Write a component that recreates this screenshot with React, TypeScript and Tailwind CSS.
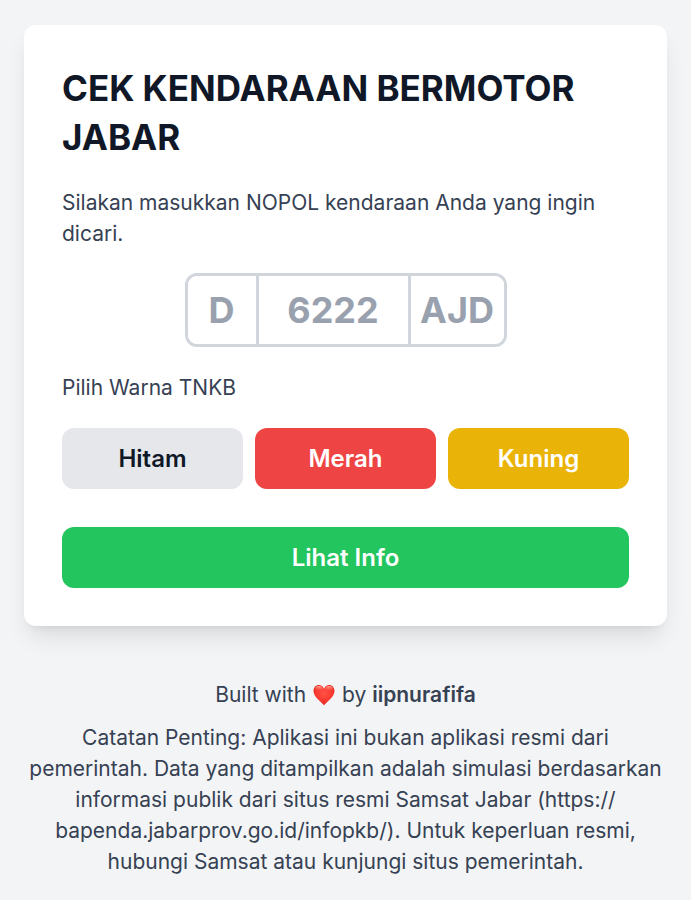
import { useState } from "react";

const colors = [
  { name: "Hitam", style: "bg-gray-200 text-gray-900" },
  { name: "Merah", style: "bg-[#ef4444] text-white" },
  { name: "Kuning", style: "bg-[#eab308] text-white" },
];

function Heart() {
  return (
    <svg viewBox="0 0 24 22" className="inline-block h-[22px] w-6 align-[-4px]" role="img" aria-label="love">
      <defs>
        <radialGradient id="heart" cx="0.5" cy="0.4" r="0.6">
          <stop offset="0" stopColor="#ff5347" />
          <stop offset="0.6" stopColor="#fb3a30" />
          <stop offset="1" stopColor="#dd2a22" />
        </radialGradient>
        <linearGradient id="shine" x1="0" y1="0" x2="0" y2="1">
          <stop offset="0" stopColor="#ffb3a8" stopOpacity="0.9" />
          <stop offset="1" stopColor="#ff6a5e" stopOpacity="0" />
        </linearGradient>
      </defs>
      <path
        d="M12 21.5C10.500 18.500 1.500 13.500 1.500 7C1.500 3.500 3.800 1 6.800 1C9.200 1 11.200 2.300 12 4.800C12.800 2.300 14.800 1 17.200 1C20.200 1 22.500 3.500 22.500 7C22.500 13.500 13.500 18.500 12 21.500Z"
        fill="url(#heart)"
      />
      <ellipse cx="6.800" cy="4.500" rx="3.500" ry="2.500" fill="url(#shine)" />
      <ellipse cx="17.200" cy="4.500" rx="3.500" ry="2.500" fill="url(#shine)" />
    </svg>
  );
}

export default function App() {
  const [selected, setSelected] = useState("");
  const field =
    "h-full min-w-0 bg-white text-center text-[36px] font-bold text-gray-900 outline-none placeholder:text-gray-400";

  return (
    <div className="flex min-h-screen flex-col items-center bg-gray-100 px-6 pt-[25px] font-['Inter',sans-serif] text-[21px] leading-[31px] text-gray-700">
      <main className="w-full rounded-xl bg-white px-[38px] pt-[39px] pb-[38px] shadow-[0_15px_23px_-5px_rgba(0,0,0,0.1),0_6px_9px_-6px_rgba(0,0,0,0.1)]">
        <h1 className="text-[35px] leading-[49px] font-bold text-gray-900">
          CEK KENDARAAN BERMOTOR JABAR
        </h1>
        <p className="mt-[25px]">Silakan masukkan NOPOL kendaraan Anda yang ingin dicari.</p>
        <form onSubmit={(e) => e.preventDefault()}>
          <div className="mx-auto mt-6 flex h-[74px] w-[322px] divide-x-3 divide-gray-300 overflow-hidden rounded-xl border-3 border-gray-300">
            <input aria-label="Kode wilayah" placeholder="D" className={`${field} w-[71px]`} />
            <input aria-label="Nomor polisi" placeholder="6222" className={`${field} flex-1`} />
            <input aria-label="Seri" placeholder="AJD" className={`${field} w-[93px]`} />
          </div>
          <p className="mt-[25px]">Pilih Warna TNKB</p>
          <div className="mt-[25px] grid grid-cols-3 gap-3">
            {colors.map((c) => (
              <button
                key={c.name}
                type="button"
                aria-pressed={selected === c.name}
                onClick={() => setSelected(c.name)}
                className={`h-[61px] rounded-xl text-[24px] font-semibold ${c.style}`}
              >
                {c.name}
              </button>
            ))}
          </div>
          <button
            type="submit"
            className="mt-[38px] h-[61px] w-full rounded-xl bg-[#22c55e] text-[24px] font-semibold text-white"
          >
            Lihat Info
          </button>
        </form>
      </main>
      <footer className="mt-[53px] w-full text-center">
        <p>
          Built with <Heart /> by <a href="#" className="font-semibold">iipnurafifa</a>
        </p>
        <p className="mt-3">
          Catatan Penting: Aplikasi ini bukan aplikasi resmi dari pemerintah. Data yang ditampilkan adalah simulasi
          berdasarkan informasi publik dari situs resmi Samsat Jabar (https://<wbr />bapenda.jabarprov.go.id/infopkb/).
          Untuk keperluan resmi, hubungi Samsat atau kunjungi situs pemerintah.
        </p>
      </footer>
    </div>
  );
}
